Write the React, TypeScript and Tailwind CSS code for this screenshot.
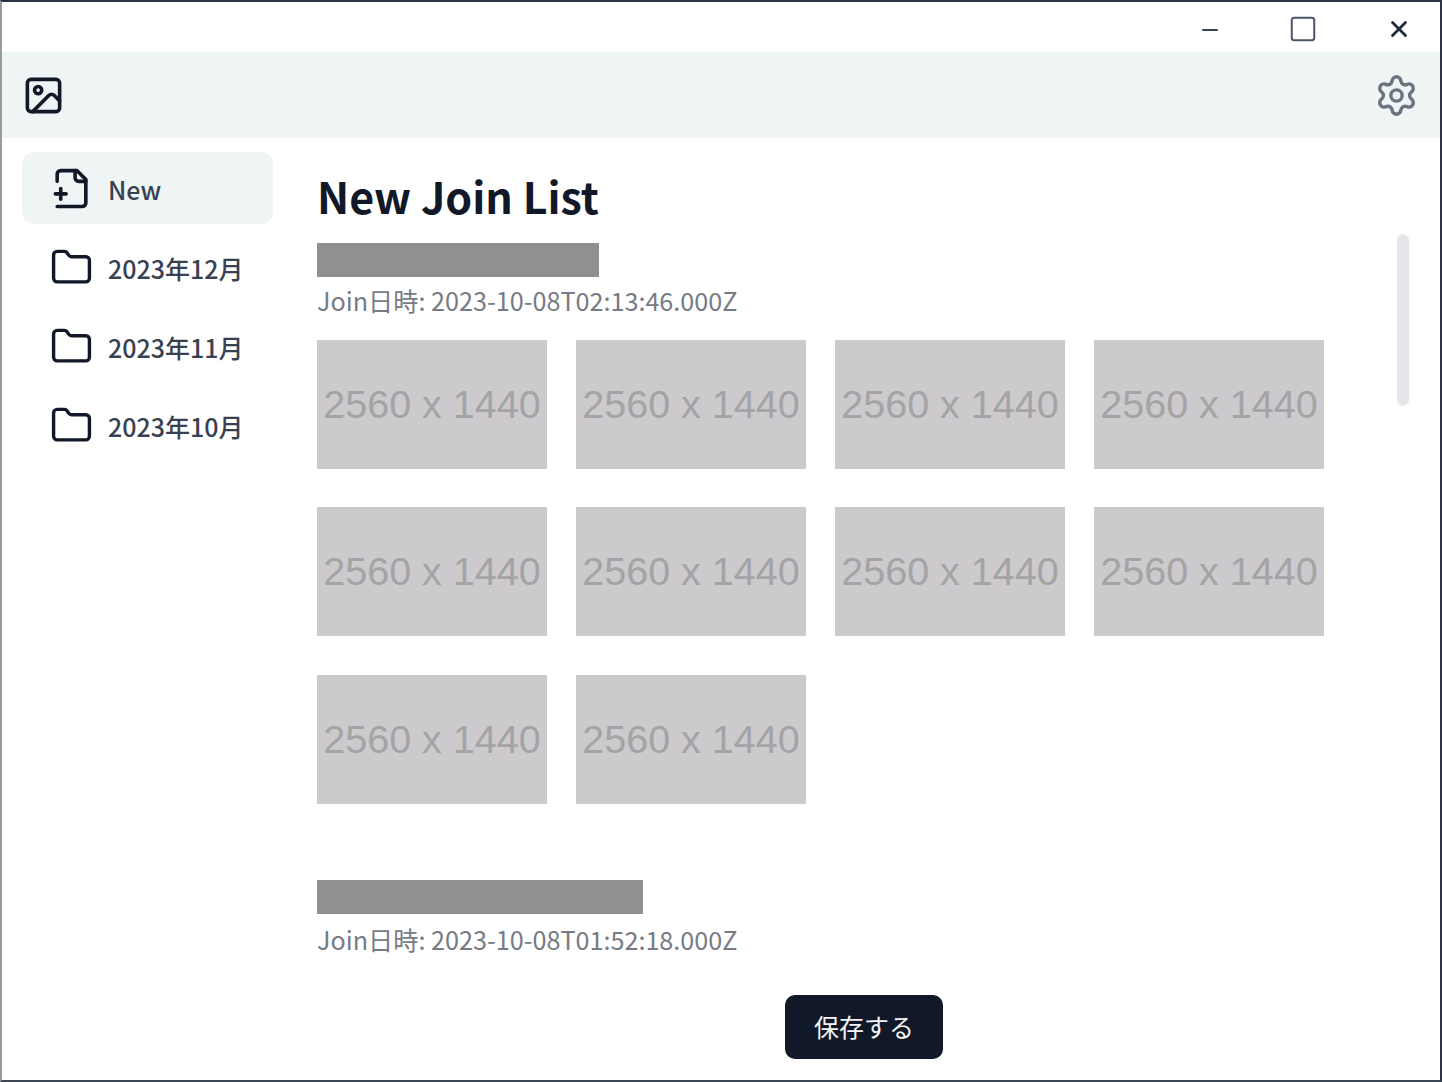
import { Folder, Image, Minus, Settings, Square, X } from 'lucide-react'

const FONT = "font-['Noto_Sans_CJK_JP','Noto_Sans',sans-serif]"

const folders = ['2023年12月', '2023年11月', '2023年10月']

function NewFileIcon() {
  return (
    <svg
      viewBox="0 0 24 24"
      fill="none"
      stroke="currentColor"
      strokeWidth={2}
      strokeLinecap="round"
      strokeLinejoin="round"
      className="size-[43px] text-[#111827]"
    >
      <path d="M4 22h14a2 2 0 0 0 2-2V7l-5-5H6a2 2 0 0 0-2 2v4" />
      <path d="M14 2v4a2 2 0 0 0 2 2h4" />
      <path d="M3 15h6" />
      <path d="M6 12v6" />
    </svg>
  )
}

function Placeholder() {
  return (
    <div className="flex h-[129px] w-[230px] items-center justify-center bg-[#cccacc] pt-[1px] font-['Liberation_Sans',sans-serif] text-[39.5px] leading-none whitespace-pre text-[#a4a3a5]">
      2560 x 1440
    </div>
  )
}

function JoinEntry({
  nameWidth,
  joinedAt,
  count,
  dateGap,
}: {
  nameWidth: string
  joinedAt: string
  count: number
  dateGap: string
}) {
  return (
    <section className="mb-[76px]">
      <div className={`h-[34px] bg-[#909090] ${nameWidth}`} />
      <p className={`h-[40px] text-[25.2px] leading-[40px] text-[#767b84] ${dateGap}`}>Join日時: {joinedAt}</p>
      <div className="mt-[19.6px] grid grid-cols-[repeat(4,230px)] gap-x-[29px] gap-y-[38.5px]">
        {Array.from({ length: count }).map((_, i) => (
          <Placeholder key={i} />
        ))}
      </div>
    </section>
  )
}

export default function App() {
  return (
    <div className={`flex h-[1082px] w-[1442px] flex-col overflow-hidden border-2 border-t-[#2b3440] border-r-[#2b3440] border-b-[#3c4652] border-l-[#9a9a9a] bg-white text-[#111827] ${FONT}`}>
      {/* タイトルバー */}
      <div className="flex h-[50px] shrink-0 items-center">
        <div className="mt-[3px] ml-auto flex items-center">
          <Minus className="mt-[3px] mr-[66px] size-[24px] text-[#374151]" strokeWidth={2} />
          <Square className="mr-[68px] size-[30px] text-[#4b5563]" strokeWidth={1.6} />
          <X className="mr-[28px] size-[26px] text-[#1f2937]" strokeWidth={2.6} />
        </div>
      </div>

      {/* ヘッダー */}
      <header className="flex h-[86px] shrink-0 items-center justify-between bg-[#eff5f5] pr-[21px] pl-[20px]">
        <Image className="size-[43px] text-[#111827]" strokeWidth={2} />
        <Settings className="size-[45px] text-[#6b7280]" strokeWidth={1.8} />
      </header>

      <div className="flex min-h-0 flex-1">
        {/* サイドバー */}
        <nav className="flex w-[271px] shrink-0 flex-col gap-[7px] pt-[14px] pl-[20px] text-[25px] font-medium text-[#374151]">
          <a className="flex h-[72px] items-center gap-[15px] rounded-[12px] bg-[#eff5f5] pl-[28px]">
            <NewFileIcon />
            <span className="mt-[3px]">New</span>
          </a>
          {folders.map((name) => (
            <a key={name} className="flex h-[72px] items-center gap-[15px] pl-[28px]">
              <Folder className="size-[43px] text-[#111827]" strokeWidth={1.9} />
              <span className="mt-[3px]">{name}</span>
            </a>
          ))}
        </nav>

        {/* メイン */}
        <main className="relative flex min-w-0 flex-1 flex-col pl-[44px]">
          <h1 className="mt-[25px] h-[64px] text-[43px] leading-[64px] font-bold text-[#111827]">New Join List</h1>
          <div className="mt-[16px] h-[700px] flex-1 overflow-hidden">
            <JoinEntry nameWidth="w-[282px]" joinedAt="2023-10-08T02:13:46.000Z" count={10} dateGap="mt-[3px]" />
            <JoinEntry nameWidth="w-[326px]" joinedAt="2023-10-08T01:52:18.000Z" count={0} dateGap="mt-[5px]" />
          </div>
          <div className="absolute top-[96px] right-[31px] h-[172px] w-[12px] rounded-full bg-[#e5e7eb]" />
          <div className="absolute right-[497px] bottom-[21px]">
            <button className="flex h-[64px] w-[158px] items-center justify-center rounded-[10px] bg-[#111827] text-[25px] text-[#f3f4f6]">
              保存する
            </button>
          </div>
        </main>
      </div>
    </div>
  )
}
